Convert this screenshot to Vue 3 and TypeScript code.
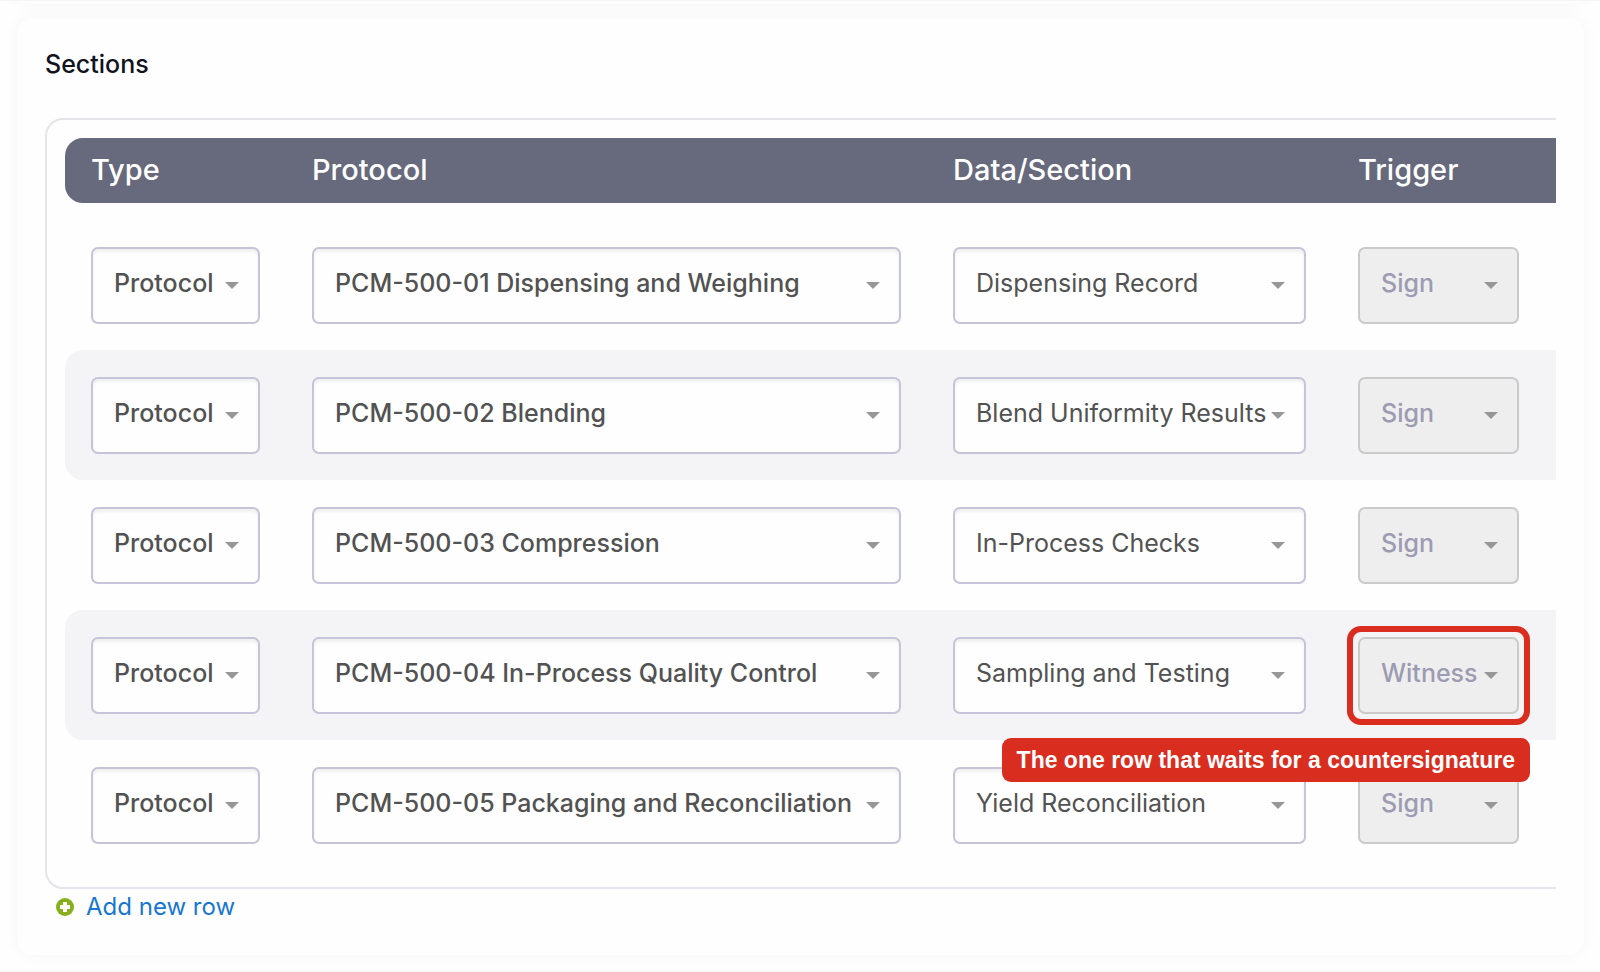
<script setup lang="ts">
interface SectionRow {
  protocol: string
  section: string
  trigger: string
  note?: string
}

const rows: SectionRow[] = [
  { protocol: 'PCM-500-01 Dispensing and Weighing', section: 'Dispensing Record', trigger: 'Sign' },
  { protocol: 'PCM-500-02 Blending', section: 'Blend Uniformity Results', trigger: 'Sign' },
  { protocol: 'PCM-500-03 Compression', section: 'In-Process Checks', trigger: 'Sign' },
  {
    protocol: 'PCM-500-04 In-Process Quality Control',
    section: 'Sampling and Testing',
    trigger: 'Witness',
    note: 'The one row that waits for a countersignature',
  },
  { protocol: 'PCM-500-05 Packaging and Reconciliation', section: 'Yield Reconciliation', trigger: 'Sign' },
]
</script>

<template>
  <main class="page">
    <div class="card card-previous"></div>
    <section class="card" aria-labelledby="sections-title">
      <h2 id="sections-title">Sections</h2>
      <div class="frame">
        <table>
          <colgroup>
            <col class="col-type" />
            <col />
            <col class="col-data" />
            <col class="col-trigger" />
          </colgroup>
          <thead>
            <tr>
              <th id="h-type" scope="col">Type</th>
              <th id="h-protocol" scope="col">Protocol</th>
              <th id="h-data" scope="col">Data/Section</th>
              <th id="h-trigger" scope="col">Trigger</th>
            </tr>
          </thead>
          <tbody>
            <tr v-for="row in rows" :key="row.protocol">
              <td>
                <div class="field">
                  <select aria-labelledby="h-type"><option>Protocol</option></select>
                  <svg class="arrow" viewBox="0 0 14 7" aria-hidden="true"><path d="M0 0h14L7 7z" /></svg>
                </div>
              </td>
              <td>
                <div class="field">
                  <select aria-labelledby="h-protocol"><option>{{ row.protocol }}</option></select>
                  <svg class="arrow" viewBox="0 0 14 7" aria-hidden="true"><path d="M0 0h14L7 7z" /></svg>
                </div>
              </td>
              <td>
                <div class="field light">
                  <select aria-labelledby="h-data"><option>{{ row.section }}</option></select>
                  <svg class="arrow" viewBox="0 0 14 7" aria-hidden="true"><path d="M0 0h14L7 7z" /></svg>
                </div>
              </td>
              <td>
                <div class="field" :class="{ marked: row.note }">
                  <select disabled aria-labelledby="h-trigger"><option>{{ row.trigger }}</option></select>
                  <svg class="arrow" viewBox="0 0 14 7" aria-hidden="true"><path d="M0 0h14L7 7z" /></svg>
                  <span v-if="row.note" class="note">{{ row.note }}</span>
                </div>
              </td>
            </tr>
          </tbody>
        </table>
      </div>
      <a class="add" href="#">
        <svg viewBox="0 0 18 18" aria-hidden="true">
          <circle cx="9" cy="9" r="9" fill="#86b01b" />
          <path d="M9 4v10M4 9h10" stroke="#fff" stroke-width="4" />
        </svg>
        Add new row
      </a>
    </section>
  </main>
</template>

<style>
body {
  margin: 0;
  background: #fefefe;
}
</style>

<style scoped>
.page {
  box-sizing: border-box;
  min-height: 100vh;
  overflow: hidden;
  padding: 0 16px 16px 17px;
  border-top: 1px solid #f4f4f5;
  border-bottom: 1px solid #f4f4f5;
  font-family: Inter, "Liberation Sans", sans-serif;
  font-size: 25px;
  line-height: 32px;
}
.card {
  box-sizing: border-box;
  padding: 30px 28px 32px 28px;
  border-radius: 16px;
  background: #fefefe;
  box-shadow: 0 0 16px rgba(0, 0, 0, 0.04);
}
.card-previous {
  height: 16px;
  padding: 0;
  margin: -13px 0 14px;
}
h2 {
  margin: 0 0 38px;
  color: #11131f;
  font-size: 25px;
  font-weight: 500;
  line-height: 32px;
}
.frame {
  padding: 18px 0 17px 18px;
  border: 2px solid #e4e4ea;
  border-right: 0;
  border-radius: 18px 0 0 18px;
}
table {
  width: 100%;
  table-layout: fixed;
  border-collapse: separate;
  border-spacing: 0;
}
.col-type {
  width: 221px;
}
.col-data {
  width: 405px;
}
.col-trigger {
  width: 224px;
}
th {
  height: 65px;
  box-sizing: border-box;
  padding: 0 26px 2px;
  background: #67697c;
  color: #fff;
  font-size: 29px;
  font-weight: 500;
  text-align: left;
}
th:first-child {
  border-radius: 18px 0 0 18px;
}
tbody::before {
  content: "";
  display: block;
  height: 17px;
}
td {
  padding: 27px 26px 26px;
}
td:last-child {
  padding-right: 37px;
}
tbody tr:nth-child(even) td {
  background: #f4f4f7;
}
tbody tr:nth-child(even) td:first-child {
  border-radius: 18px 0 0 18px;
}
.field {
  position: relative;
  display: grid;
  align-items: center;
}
select {
  grid-area: 1 / 1;
  box-sizing: border-box;
  width: 100%;
  height: 77px;
  margin: 0;
  padding: 0 20px 5px 21px;
  border: 2px solid #c5c4d8;
  border-radius: 7px;
  background: #fefefe;
  box-shadow: inset 0 3px 3px rgba(0, 0, 0, 0.06);
  color: #525252;
  font-family: inherit;
  font-size: 25px;
  font-weight: 500;
  appearance: none;
}
.light select {
  font-weight: 400;
}
select:disabled {
  border-color: #cacaca;
  background: #eee;
  box-shadow: none;
  color: #9c9bb2;
  opacity: 1;
}
.arrow {
  grid-area: 1 / 1;
  justify-self: end;
  width: 14px;
  height: 7px;
  margin-right: 21px;
  fill: #979797;
  pointer-events: none;
}
.marked::before {
  content: "";
  position: absolute;
  inset: -11px;
  border: 6px solid #d92d20;
  border-radius: 14px;
  pointer-events: none;
}
.note {
  position: absolute;
  z-index: 1;
  top: 101px;
  right: -11px;
  padding: 0 15px;
  border-radius: 9px;
  background: #d92d20;
  color: #fff;
  font-family: "Liberation Sans", Arial, sans-serif;
  font-size: 23px;
  font-weight: 700;
  line-height: 44px;
  white-space: nowrap;
}
.add {
  display: flex;
  align-items: center;
  width: fit-content;
  gap: 12px;
  margin: 2px 0 0 11px;
  color: #1677d2;
  font-size: 24px;
  text-decoration: none;
}
.add svg {
  width: 18px;
  height: 18px;
}
</style>
